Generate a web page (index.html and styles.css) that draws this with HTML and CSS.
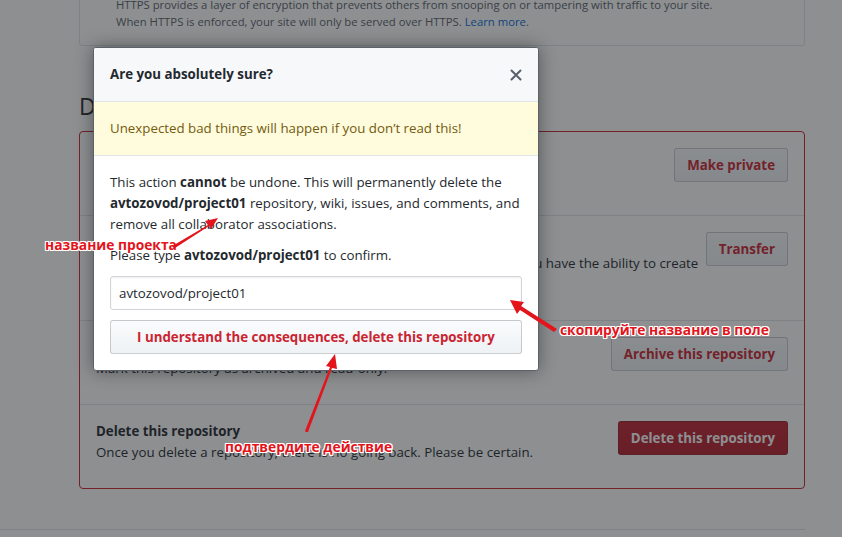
FILE: index.html
```html
<!DOCTYPE html>
<html lang="en">
<head>
<meta charset="utf-8">
<title>Danger Zone</title>
<link rel="stylesheet" href="styles.css">
</head>
<body>
<div class="page">
  <div class="pages-box">
    <p class="note">Some GitHub Pages settings are shown here.</p>
    <p class="note">HTTPS provides a layer of encryption that prevents others from snooping on or tampering with traffic to your site.<br>When HTTPS is enforced, your site will only be served over HTTPS. <a class="link" href="#">Learn more</a>.</p>
  </div>

  <h2 class="subhead">Danger Zone</h2>

  <div class="danger-box">
    <div class="row">
      <div class="row-text">
        <strong class="row-title">Change repository visibility</strong>
        <p class="row-desc">This repository is currently public.</p>
      </div>
      <button class="btn btn-outline-danger">Make private</button>
    </div>
    <div class="row">
      <div class="row-text">
        <strong class="row-title">Transfer ownership</strong>
        <p class="row-desc">Transfer this repository to another user or to an organization where you have the ability to create<br>repositories.</p>
      </div>
      <button class="btn btn-outline-danger">Transfer</button>
    </div>
    <div class="row">
      <div class="row-text">
        <strong class="row-title">Archive this repository</strong>
        <p class="row-desc">Mark this repository as archived and read-only.</p>
      </div>
      <button class="btn btn-outline-danger">Archive this repository</button>
    </div>
    <div class="row">
      <div class="row-text">
        <strong class="row-title">Delete this repository</strong>
        <p class="row-desc">Once you delete a repository, there is no going back. Please be certain.</p>
      </div>
      <button class="btn btn-danger">Delete this repository</button>
    </div>
  </div>
</div>
<div class="footer"></div>

<div class="overlay"></div>

<div class="modal">
  <div class="modal-header">
    <h3 class="modal-title">Are you absolutely sure?</h3>
    <svg class="close" width="12" height="12" viewBox="0 0 12 12" aria-label="Close"><path d="M1.5 1.5 L10.5 10.5 M10.5 1.5 L1.5 10.5" stroke="#586069" stroke-width="2" stroke-linecap="round"/></svg>
  </div>
  <div class="flash-warn">Unexpected bad things will happen if you don’t read this!</div>
  <div class="modal-body">
    <p class="modal-text">This action <strong>cannot</strong> be undone. This will permanently delete the<br><strong>avtozovod/project01</strong> repository, wiki, issues, and comments, and<br>remove all collaborator associations.</p>
    <p class="modal-text">Please type <strong>avtozovod/project01</strong> to confirm.</p>
    <input class="form-control" type="text" value="avtozovod/project01">
    <button class="btn btn-block">I understand the consequences, delete this repository</button>
  </div>
</div>

<div class="annotation note-1">название проекта</div>
<div class="annotation note-2">скопируйте название в поле</div>
<div class="annotation note-3">подтвердите действие</div>

<svg class="arrows" width="842" height="537" viewBox="0 0 842 537">
  <polygon fill="#e3141c" points="172,247 174,245 208,225 205,221 218,218 211,229 209,226 175,248"/>
  <polygon fill="#e3141c" points="556,330 554,332 520,310 517,314 510,300 524,302 521,306 557,329"/>
  <polygon fill="#e3141c" points="306,432 308,432 332,368 337,369 335,354 326,366 330,367 305,431"/>
</svg>
</body>
</html>
```
FILE: styles.css
```css
html, body {
  margin: 0;
  padding: 0;
}
body {
  background: #ffffff;
  font-family: "Open Sans", "Noto Sans", sans-serif;
  font-size: 13.3px;
  line-height: 21px;
  color: #24292e;
  width: 842px;
  height: 537px;
  overflow: hidden;
  position: relative;
}
.page {
  margin-left: 79px;
  width: 726px;
}
.pages-box {
  margin-top: -30px;
  border: 1px solid #e1e4e8;
  border-radius: 3px;
  padding: 0 16px 15px 36px;
}
.note {
  margin: 0;
  font-size: 11.3px;
  line-height: 17px;
  color: #586069;
  white-space: nowrap;
}
.note:first-child {
  height: 25px;
}
.link {
  color: #0366d6;
  text-decoration: none;
}
.subhead {
  margin: 45px 0 10px;
  font-size: 23px;
  line-height: 30px;
  font-weight: 400;
}
.danger-box {
  border: 1px solid #cb2431;
  border-radius: 4px;
}
.row {
  display: flex;
  justify-content: space-between;
  align-items: flex-start;
  padding: 16px;
}
.row + .row {
  border-top: 1px solid #e1e4e8;
}
.row-title {
  display: block;
  font-weight: 700;
}
.row-desc {
  margin: 0 0 9px;
  white-space: nowrap;
}
.btn {
  font-family: "Open Sans", "Noto Sans", sans-serif;
  font-size: 13.3px;
  font-weight: 700;
  line-height: 20px;
  padding: 6px 12px;
  border: 1px solid rgba(27, 31, 35, 0.2);
  border-radius: 3px;
  background: linear-gradient(#fafbfc, #eff3f6 90%);
  color: #cb2431;
  white-space: nowrap;
}
.btn-danger {
  background: linear-gradient(#c02331, #b61e2b 90%);
  color: #ffffff;
}
.footer {
  margin-top: 40px;
  width: 805px;
  border-top: 1px solid #e1e4e8;
}
.overlay {
  position: absolute;
  inset: 0;
  background: rgba(27, 31, 35, 0.5);
}
.modal {
  position: absolute;
  left: 93px;
  top: 47px;
  width: 446px;
  box-sizing: border-box;
  background: #ffffff;
  border: 1px solid #5a6169;
  border-radius: 3px;
  box-shadow: 0 0 18px rgba(0, 0, 0, 0.4);
  overflow: hidden;
}
.modal-header {
  display: flex;
  justify-content: space-between;
  align-items: center;
  padding: 16px;
  background: #f6f8fa;
  border-bottom: 1px solid #e1e4e8;
}
.modal-title {
  margin: 0;
  font-size: 13.3px;
  line-height: 21px;
  font-weight: 700;
}
.close {
  display: block;
}
.flash-warn {
  padding: 16px;
  background: #fffbdd;
  color: #735c0f;
  border-bottom: 1px solid #e1e4e8;
}
.modal-body {
  padding: 16px;
}
.modal-text {
  margin: 0 0 10px;
  white-space: nowrap;
}
.form-control {
  display: block;
  width: 100%;
  box-sizing: border-box;
  height: 34px;
  margin: 0 0 10px;
  padding: 6px 8px;
  font-family: "Open Sans", "Noto Sans", sans-serif;
  font-size: 13.3px;
  color: #24292e;
  background: #ffffff;
  border: 1px solid #d1d5da;
  border-radius: 3px;
  box-shadow: inset 0 1px 2px rgba(27, 31, 35, 0.075);
}
.btn-block {
  display: block;
  width: 100%;
  text-align: center;
}
.annotation {
  position: absolute;
  font-family: "Open Sans", "Noto Sans", sans-serif;
  font-size: 13.8px;
  font-weight: 700;
  line-height: 16px;
  color: #e3141c;
  white-space: nowrap;
  text-shadow: 1px 0 0 #fff, -1px 0 0 #fff, 0 1px 0 #fff, 0 -1px 0 #fff,
    1px 1px 0 #fff, -1px -1px 0 #fff, 1px -1px 0 #fff, -1px 1px 0 #fff;
}
.note-1 {
  left: 45px;
  top: 237px;
}
.note-2 {
  left: 560px;
  top: 322px;
}
.note-3 {
  left: 225px;
  top: 439px;
}
.arrows {
  position: absolute;
  left: 0;
  top: 0;
}
```
